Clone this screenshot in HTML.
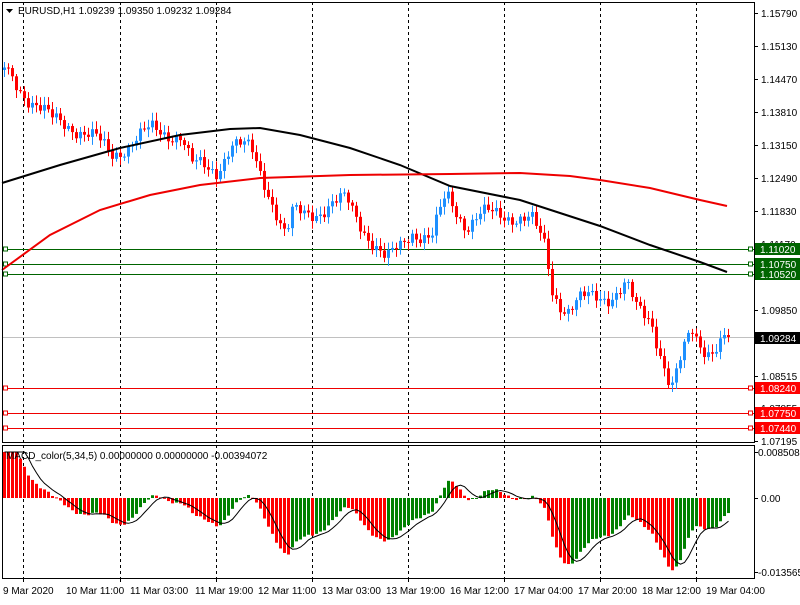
<!DOCTYPE html>
<html><head><meta charset="utf-8"><style>
body{margin:0;background:#fff;width:800px;height:600px;overflow:hidden;font-family:"Liberation Sans",sans-serif}
svg text{font-family:"Liberation Sans",sans-serif;font-size:10px}
</style></head><body>
<svg id="s" width="800" height="600" xmlns="http://www.w3.org/2000/svg"></svg>
<script>
(function(){
var s=document.getElementById('s'),h='';
function L(x1,y1,x2,y2,c,w,d){h+='<line x1="'+x1+'" y1="'+y1+'" x2="'+x2+'" y2="'+y2+'" stroke="'+c+'" stroke-width="'+(w||1)+'"'+(d?' stroke-dasharray="'+d+'"':'')+'/>';}
function R(x,y,w,hh,c){h+='<rect x="'+x+'" y="'+y+'" width="'+w+'" height="'+hh+'" fill="'+c+'"/>';}
function T(x,y,t,c,a){h+='<text x="'+x+'" y="'+y+'" fill="'+(c||'#000')+'"'+(a?' text-anchor="'+a+'"':'')+'>'+t+'</text>';}
[23,120,216,312,408,504,600,696].forEach(function(x){L(x+.5,2,x+.5,442,'#000',1,'3,3');L(x+.5,445,x+.5,578,'#000',1,'3,3');L(x+.5,578,x+.5,582,'#000');});
[[249,'#006400'],[264,'#006400'],[274,'#006400'],[388,'#e00'],[413,'#e00'],[428,'#e00']].forEach(function(a){L(2,a[0]+.5,754,a[0]+.5,a[1]);h+='<rect x="3.5" y="'+(a[0]-2)+'" width="4" height="4" fill="#fff" stroke="'+a[1]+'"/><rect x="748.5" y="'+(a[0]-2)+'" width="4" height="4" fill="#fff" stroke="'+a[1]+'"/>';});
L(2,337.5,754,337.5,'#c0c0c0');
var K=[[3,70],[25,95],[50,120],[70,125],[95,140],[110,155],[150,130],[180,135],[190,165],[215,170],[230,145],[250,150],[265,185],[285,240],[290,215],[320,210],[345,200],[370,240],[385,262],[400,245],[410,230],[430,240],[445,195],[465,225],[480,215],[510,215],[530,220],[545,250],[550,290],[565,310],[580,300],[610,295],[625,285],[635,310],[650,320],[660,355],[670,390],[680,360],[690,330],[700,345],[710,350],[727,337]];
function interp(x){for(var i=0;i<K.length-1;i++){if(x<=K[i+1][0]){var t=(x-K[i][0])/(K[i+1][0]-K[i][0]);return K[i][1]+t*(K[i+1][1]-K[i][1]);}}return K[K.length-1][1];}
function toP(y){return 1.1579-(y-13)/428*0.08595;}
var prev=interp(3),closes=[],xs=[];
for(var x=3;x<=727;x+=4){var c=interp(x)+(x<727?Math.sin(x*1.7)*7+Math.sin(x*0.53)*4:0);var o=prev;var tp=Math.min(o,c),bt=Math.max(o,c);var up=c<o;var col=up?'#1e90ff':'#f00';
L(x+1.5,tp-2-Math.abs(Math.sin(x*2.3))*6,x+1.5,bt+2+Math.abs(Math.cos(x*1.9))*6,col);R(x,tp,3,Math.max(1,bt-tp),col);closes.push(toP(c));xs.push(x);prev=c;}
function poly(pts,c){h+='<polyline points="'+pts.map(function(p){return p.join(',')}).join(' ')+'" fill="none" stroke="'+c+'" stroke-width="2"/>';}
poly([[2,183],[60,165],[120,148],[180,135],[230,129],[260,128],[300,135],[350,148],[400,165],[450,186],[520,200],[600,226],[650,245],[700,262],[727,272]],'#000');
poly([[2,270],[50,235],[100,210],[150,195],[200,185],[260,178],[350,175],[450,174],[520,173],[570,176],[600,180],[650,188],[700,200],[727,206]],'#e00');
h+='<rect x="2.5" y="2.5" width="752" height="440" fill="none" stroke="#000"/>';
h+='<rect x="2.5" y="445.5" width="752" height="133" fill="none" stroke="#000"/>';
function ema(a,n,e0){var k=2/(n+1),r=[],e=e0;a.forEach(function(v){e=v*k+e*(1-k);r.push(e)});return r;}
var e5=ema(closes,5,closes[0]+0.002),e34=ema(closes,34,toP(125)),m=e5.map(function(v,i){return v-e34[i]});
var sig=[];for(var i=0;i<m.length;i++){var sm=0,n=0;for(var j=Math.max(0,i-4);j<=i;j++){sm+=m[j];n++}sig.push(sm/n);}
var sc=5406*1.1,z=498,pts=[];
for(var i=0;i<m.length;i++){var y=z-m[i]*sc;y=Math.max(452,Math.min(573,y));var col=(i>0&&m[i]>m[i-1])?'#008000':'#f00';R(xs[i],Math.min(y,z),3,Math.max(1,Math.abs(y-z)),col);var sy=Math.max(452,Math.min(573,z-sig[i]*sc));pts.push([xs[i]+1.5,sy.toFixed(1)]);}
h+='<polyline points="'+pts.map(function(p){return p.join(',')}).join(' ')+'" fill="none" stroke="#000" stroke-width="1"/>';
var ax=[[13,'1.15790'],[46,'1.15130'],[79,'1.14470'],[112,'1.13810'],[145,'1.13150'],[178,'1.12490'],[211,'1.11830'],[244,'1.11170'],[310,'1.09850'],[376,'1.08515'],[408,'1.07855'],[441,'1.07195']];
ax.forEach(function(a){L(754,a[0]+.5,758,a[0]+.5,'#000');T(761,a[0]+4,a[1]);});
L(754,452.5,758,452.5,'#000');T(758,456,'0.0085088');L(754,498.5,758,498.5,'#000');T(761,502,'0.00');L(754,572.5,758,572.5,'#000');T(758,576,'-0.013565');
[[249,'1.11020','#006400'],[264,'1.10750','#006400'],[274,'1.10520','#006400'],[338,'1.09284','#000'],[388,'1.08240','#f00'],[413,'1.07750','#f00'],[428,'1.07440','#f00']].forEach(function(a){R(755,a[0]-6,45,12,a[2]);T(760,a[0]+4,a[1],'#fff');});
h+='<polygon points="6,9 13,9 9.5,13" fill="#000"/>';
T(18,14,'EURUSD,H1  1.09239 1.09350 1.09232 1.09284');
T(6,459,'MACD_color(5,34,5) 0.00000000 0.00000000 -0.00394072');
[[3,'9 Mar 2020'],[66,'10 Mar 11:00'],[130,'11 Mar 03:00'],[195,'11 Mar 19:00'],[258,'12 Mar 11:00'],[322,'13 Mar 03:00'],[386,'13 Mar 19:00'],[450,'16 Mar 12:00'],[514,'17 Mar 04:00'],[578,'17 Mar 20:00'],[642,'18 Mar 12:00'],[706,'19 Mar 04:00']].forEach(function(a){T(a[0],594,a[1]);});
s.innerHTML=h;
})();
</script>
</body></html>
